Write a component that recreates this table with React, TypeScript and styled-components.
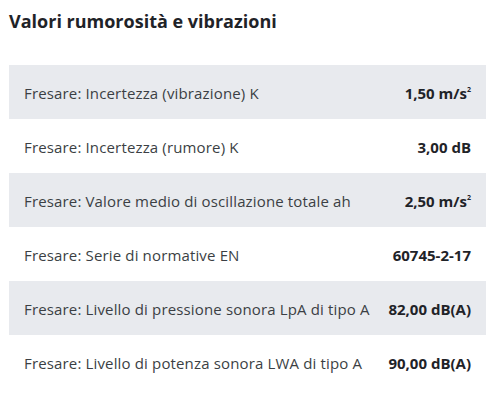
import React from "react";
import styled, { createGlobalStyle } from "styled-components";

const Global = createGlobalStyle`
  html, body { margin: 0; padding: 0; background: #fff; }
  body { font-family: "Open Sans", "Liberation Sans", sans-serif; }
`;

const Wrapper = styled.div`
  padding: 9px 10px 0 9px;
`;

const Title = styled.h2`
  margin: 0 0 32px 0;
  font-size: 18px;
  font-weight: 700;
  color: #1f2328;
  line-height: 24px;
`;

const Table = styled.div`
  display: flex;
  flex-direction: column;
`;

const Row = styled.div<{ $shaded: boolean }>`
  display: flex;
  align-items: center;
  justify-content: space-between;
  gap: 14px;
  height: 54px;
  box-sizing: border-box;
  padding: 2px 15px 0 15px;
  background: ${(p) => (p.$shaded ? "#e8eaee" : "#ffffff")};
`;

const Label = styled.span`
  font-size: 15px;
  letter-spacing: 0.15px;
  color: #3b3f44;
`;

const Value = styled.span`
  font-size: 15px;
  font-weight: 700;
  color: #1f2328;
  white-space: nowrap;
`;

const Sup = styled.sup`
  font-size: 7px;
  vertical-align: 7px;
  line-height: 0;
`;

const rows: { label: string; value: React.ReactNode }[] = [
  { label: "Fresare: Incertezza (vibrazione) K", value: <>1,50 m/s<Sup>2</Sup></> },
  { label: "Fresare: Incertezza (rumore) K", value: "3,00 dB" },
  { label: "Fresare: Valore medio di oscillazione totale ah", value: <>2,50 m/s<Sup>2</Sup></> },
  { label: "Fresare: Serie di normative EN", value: "60745-2-17" },
  { label: "Fresare: Livello di pressione sonora LpA di tipo A", value: "82,00 dB(A)" },
  { label: "Fresare: Livello di potenza sonora LWA di tipo A", value: "90,00 dB(A)" },
];

export default function App() {
  return (
    <>
      <Global />
      <Wrapper>
        <Title>Valori rumorosità e vibrazioni</Title>
        <Table>
          {rows.map((r, i) => (
            <Row key={i} $shaded={i % 2 === 0}>
              <Label>{r.label}</Label>
              <Value>{r.value}</Value>
            </Row>
          ))}
        </Table>
      </Wrapper>
    </>
  );
}
